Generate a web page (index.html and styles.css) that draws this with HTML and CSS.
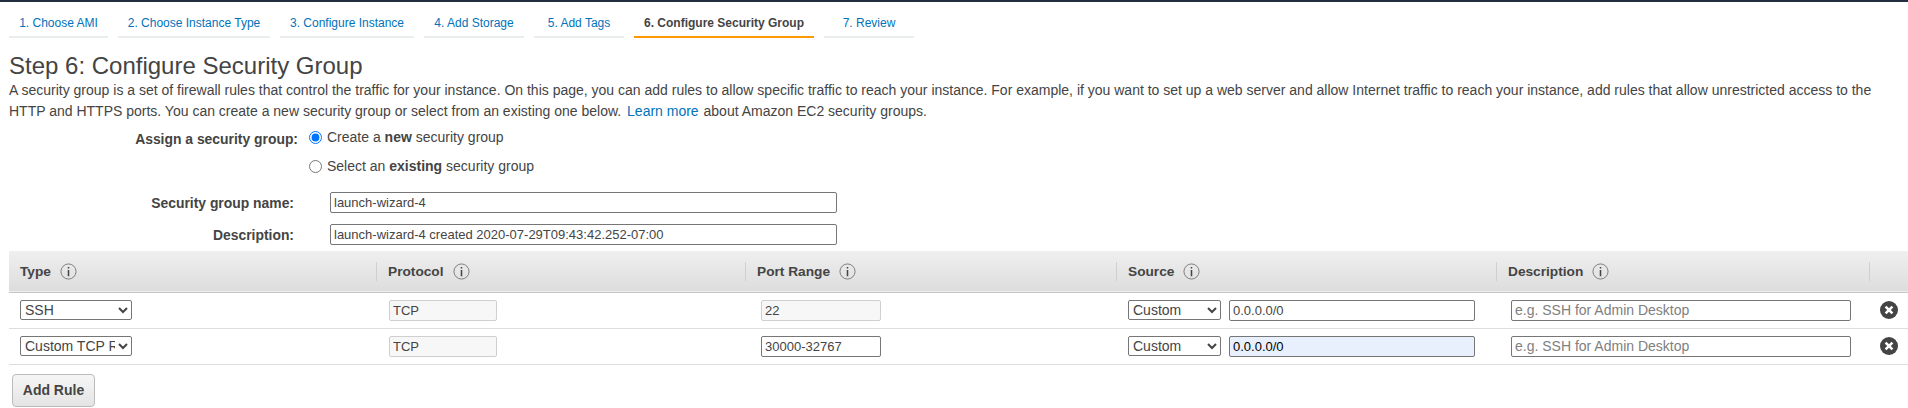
FILE: index.html
```html
<!DOCTYPE html>
<html>
<head>
<meta name="viewport" content="width=device-width, initial-scale=1.0"/>
<link rel="stylesheet" href="styles.css">
</head>
<body>

    <div class="topLine"></div>

    <ul class="wizardTabs">
        <li class="tabAmi"><a href="#">1. Choose AMI</a></li>
        <li class="tabType"><a href="#">2. Choose Instance Type</a></li>
        <li class="tabInstance"><a href="#">3. Configure Instance</a></li>
        <li class="tabStorage"><a href="#">4. Add Storage</a></li>
        <li class="tabTags"><a href="#">5. Add Tags</a></li>
        <li class="tabGroup current"><a href="#">6. Configure Security Group</a></li>
        <li class="tabReview"><a href="#">7. Review</a></li>
    </ul>

    <div class="stepIntro">
        <h1>Step 6: Configure Security Group</h1>
        <p>A security group is a set of firewall rules that control the traffic for your instance. On this page, you can add rules to allow specific traffic to reach your instance. For example, if you want to set up a web server and allow Internet traffic to reach your instance, add rules that allow unrestricted access to the HTTP and HTTPS ports. You can create a new security group or select from an existing one below. <a href="#" class="learnMore">Learn more</a> about Amazon EC2 security groups.</p>
    </div>

    <div class="assignGroup">
        <span class="assignLabel">Assign a security group:</span>
        <div class="assignOptions">
            <label><input type="radio" name="sg" checked><span>Create a <b>new</b> security group</span></label>
            <label><input type="radio" name="sg"><span>Select an <b>existing</b> security group</span></label>
        </div>
    </div>

    <div class="groupFields">
        <div class="fieldRow">
            <label>Security group name:</label>
            <input type="text" value="launch-wizard-4">
        </div>
        <div class="fieldRow">
            <label>Description:</label>
            <input type="text" value="launch-wizard-4 created 2020-07-29T09:43:42.252-07:00">
        </div>
    </div>

    <table class="rulesTable">
        <colgroup>
            <col class="colType">
            <col class="colProtocol">
            <col class="colPort">
            <col class="colSource">
            <col class="colDesc">
            <col>
        </colgroup>
        <thead>
        <tr>
            <th><span class="thInner">Type <svg class="infoIcon" viewBox="0 0 18 18"><circle cx="9" cy="9" r="8"/><path d="M9 7.5v6.5M9 4.2v1.6"/></svg></span></th>
            <th><span class="thInner">Protocol <svg class="infoIcon" viewBox="0 0 18 18"><circle cx="9" cy="9" r="8"/><path d="M9 7.5v6.5M9 4.2v1.6"/></svg></span></th>
            <th><span class="thInner">Port Range <svg class="infoIcon" viewBox="0 0 18 18"><circle cx="9" cy="9" r="8"/><path d="M9 7.5v6.5M9 4.2v1.6"/></svg></span></th>
            <th><span class="thInner">Source <svg class="infoIcon" viewBox="0 0 18 18"><circle cx="9" cy="9" r="8"/><path d="M9 7.5v6.5M9 4.2v1.6"/></svg></span></th>
            <th><span class="thInner">Description <svg class="infoIcon" viewBox="0 0 18 18"><circle cx="9" cy="9" r="8"/><path d="M9 7.5v6.5M9 4.2v1.6"/></svg></span></th>
            <th><span class="thInner">&nbsp;</span></th>
        </tr>
        </thead>
        <tbody>
        <tr>
            <td><select class="typeSelect"><option>SSH</option></select></td>
            <td><input class="protoInput" type="text" value="TCP" disabled></td>
            <td><input class="portInput" type="text" value="22" disabled></td>
            <td>
                <div class="sourceCell">
                    <select class="sourceSelect"><option>Custom</option></select>
                    <input class="cidrInput" type="text" value="0.0.0.0/0">
                </div>
            </td>
            <td><input class="descInput" type="text" placeholder="e.g. SSH for Admin Desktop"></td>
            <td class="removeCell"><svg class="removeIcon" viewBox="0 0 18 18"><circle cx="9" cy="9" r="9"/><path d="M5.6 5.6l6.8 6.8M12.4 5.6l-6.8 6.8"/></svg></td>
        </tr>
        <tr>
            <td><select class="typeSelect"><option>Custom TCP Rule</option></select></td>
            <td><input class="protoInput" type="text" value="TCP" disabled></td>
            <td><input class="portInput" type="text" value="30000-32767"></td>
            <td>
                <div class="sourceCell">
                    <select class="sourceSelect"><option>Custom</option></select>
                    <input class="cidrInput filled" type="text" value="0.0.0.0/0">
                </div>
            </td>
            <td><input class="descInput" type="text" placeholder="e.g. SSH for Admin Desktop"></td>
            <td class="removeCell"><svg class="removeIcon" viewBox="0 0 18 18"><circle cx="9" cy="9" r="9"/><path d="M5.6 5.6l6.8 6.8M12.4 5.6l-6.8 6.8"/></svg></td>
        </tr>
        </tbody>
    </table>

    <button class="addRule">Add Rule</button>

</body>
</html>
```
FILE: styles.css
```css
* {
    box-sizing: border-box;
}

body {
    margin: 0;
    font-family: "Liberation Sans", Arial, sans-serif;
    font-size: 14px;
    color: #444444;
    background-color: #ffffff;
    overflow: hidden;
}

a {
    color: #0073bb;
    text-decoration: none;
}

.topLine {
    height: 2px;
    background-color: #232f3e;
}

.wizardTabs {
    display: flex;
    gap: 10px;
    list-style: none;
    margin: 0;
    padding: 10px 0 0 9px;
}
.wizardTabs li {
    height: 26px;
    padding-top: 4px;
    text-align: center;
    font-size: 12px;
    white-space: nowrap;
    border-bottom: 2px solid #eaeded;
}
.tabAmi { width: 99px; }
.tabType { width: 152px; }
.tabInstance { width: 134px; }
.tabStorage { width: 100px; }
.tabTags { width: 90px; }
.tabGroup { width: 180px; }
.tabReview { width: 90px; }
.wizardTabs li.current {
    font-weight: bold;
    border-bottom-color: #ff9900;
}
.wizardTabs li.current a {
    color: #444444;
}

.stepIntro {
    padding: 14px 0 0 9px;
}
.stepIntro h1 {
    margin: 0;
    font-size: 24px;
    font-weight: normal;
    line-height: 27px;
    color: #444444;
}
.stepIntro p {
    margin: 1px 0 0 0;
    line-height: 21px;
    padding-right: 20px;
}
.learnMore {
    margin: 0 1px 0 2px;
}

.assignGroup {
    display: flex;
    margin-top: 6px;
}
.assignLabel {
    width: 298px;
    padding-top: 3px;
    text-align: right;
    font-size: 13.9px;
    font-weight: bold;
}
.assignOptions {
    display: flex;
    flex-direction: column;
    gap: 11px;
    padding-left: 10px;
}
.assignOptions label {
    display: flex;
    align-items: center;
    gap: 1px;
    height: 18px;
}
.assignOptions input {
    margin: 0 4px 0 1px;
}

.groupFields {
    display: flex;
    flex-direction: column;
    gap: 11px;
    margin-top: 17px;
}
.fieldRow {
    display: flex;
    align-items: center;
}
.fieldRow label {
    width: 294px;
    text-align: right;
    font-size: 13.9px;
    font-weight: bold;
}
.fieldRow input {
    width: 507px;
    margin-left: 36px;
}

input[type="text"] {
    height: 21px;
    padding: 0 3px;
    font-family: inherit;
    font-size: 13px;
    color: #444444;
    background-color: #ffffff;
    border: 1px solid #767676;
    border-radius: 2px;
}
input[type="text"]:disabled {
    background-color: #f7f7f7;
    border-color: #cfcfcf;
}
input::placeholder {
    font-size: 14px;
    color: #808080;
}
select {
    height: 20px;
    padding: 0;
    font-family: inherit;
    font-size: 14px;
    color: #444444;
    background-color: #ffffff;
    border: 1px solid #767676;
    border-radius: 2px;
}

.rulesTable {
    width: 1899px;
    margin: 6px 0 0 9px;
    border-collapse: collapse;
    table-layout: fixed;
}
.colType { width: 367px; }
.colProtocol { width: 369px; }
.colPort { width: 371px; }
.colSource { width: 380px; }
.colDesc { width: 373px; }

.rulesTable thead tr {
    background: linear-gradient(#efefef, #dddddd);
    border-bottom: 1px solid #c6c6c6;
}
.rulesTable th {
    height: 41px;
    padding: 0;
    text-align: left;
    font-size: 13.7px;
}
.thInner {
    display: flex;
    align-items: center;
    gap: 9px;
    height: 19px;
    padding-left: 11px;
    border-left: 1px solid #cfcfcf;
}
.rulesTable th:first-child .thInner {
    border-left: none;
}
.infoIcon {
    width: 17px;
    height: 17px;
    fill: none;
    stroke: #777777;
    stroke-width: 1;
}
.infoIcon path {
    stroke: #444444;
    stroke-width: 1.6;
}

.rulesTable tbody tr {
    border-bottom: 1px solid #dddddd;
}
.rulesTable td {
    height: 36px;
    padding: 0 0 0 12px;
    vertical-align: middle;
}
.rulesTable td select,
.rulesTable td input {
    display: block;
}
.typeSelect { width: 112px; margin-left: -1px; }
.protoInput { width: 108px; margin-left: 1px; }
.portInput { width: 120px; margin-left: 4px; }
.sourceCell {
    display: flex;
    align-items: center;
    gap: 8px;
}
.sourceSelect { width: 93px; }
.cidrInput { width: 246px; }
input.filled {
    background-color: #e8f0fe;
    color: #000000;
}
.descInput { width: 340px; margin-left: 3px; }
.rulesTable td.removeCell {
    padding-left: 11px;
}
.removeIcon {
    display: block;
    width: 18px;
    height: 18px;
    fill: #444444;
    stroke: #ffffff;
    stroke-width: 2.6;
}
.removeIcon circle {
    stroke: none;
}

.addRule {
    display: block;
    width: 83px;
    height: 33px;
    margin: 9px 0 0 12px;
    font-family: inherit;
    font-size: 14px;
    font-weight: bold;
    color: #444444;
    background: linear-gradient(#f6f6f6, #e4e4e4);
    border: 1px solid #bbbbbb;
    border-radius: 4px;
}
```
